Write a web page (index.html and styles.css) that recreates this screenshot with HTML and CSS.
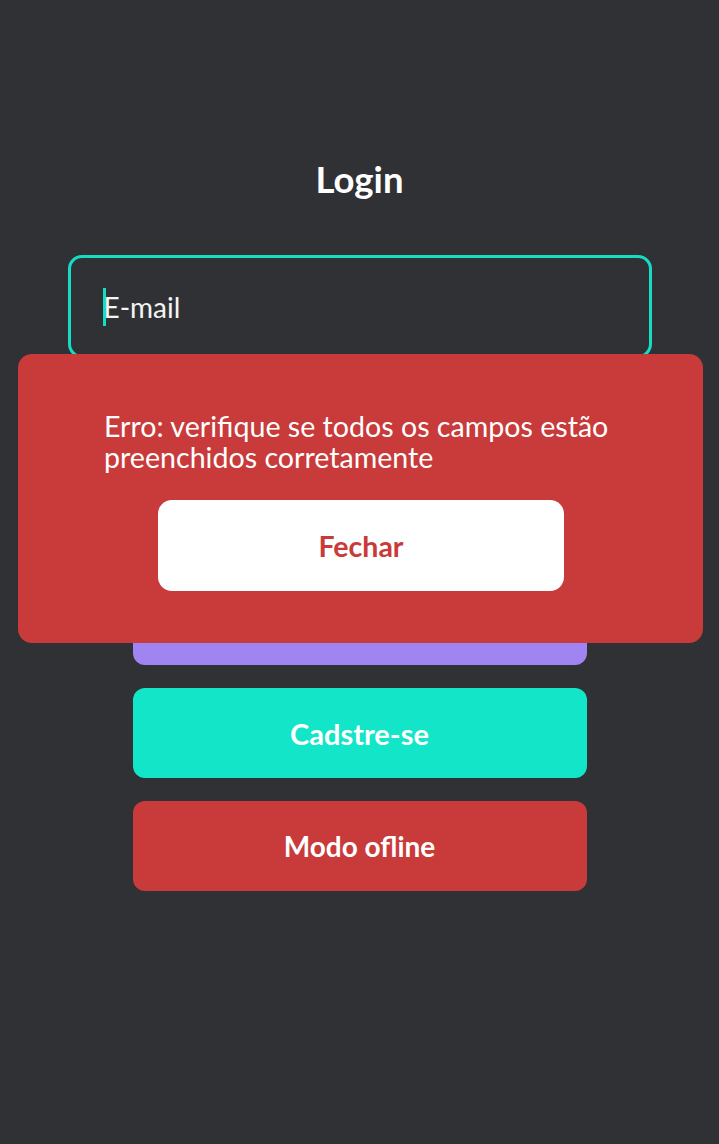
FILE: index.html
```html
<!DOCTYPE html>
<html lang="pt">
<head>
<meta charset="utf-8">
<link rel="stylesheet" href="styles.css">
</head>
<body>
<main class="screen">
  <h1 class="title">Login</h1>
  <div class="field field-focus"><span class="caret"></span><span class="placeholder">E-mail</span></div>
  <div class="field"></div>
  <div class="actions">
    <button class="btn btn-purple">Entrar</button>
    <button class="btn btn-teal">Cadstre-se</button>
    <button class="btn btn-red">Modo ofline</button>
  </div>
</main>
<div class="modal">
  <p class="modal-text">Erro: verifique se todos os campos estão preenchidos corretamente</p>
  <button class="modal-btn">Fechar</button>
</div>
</body>
</html>
```
FILE: styles.css
```css
html, body {
  margin: 0;
  padding: 0;
}
body {
  background: #303135;
  font-family: Lato, "Noto Sans", sans-serif;
  color: #ffffff;
  width: 719px;
  height: 1144px;
  overflow: hidden;
  position: relative;
}
.screen {
  display: flex;
  flex-direction: column;
  align-items: center;
  padding-top: 152px;
}
.title {
  margin: 0;
  font-size: 36.5px;
  font-weight: 700;
  line-height: 54px;
  height: 54px;
}
.field {
  box-sizing: border-box;
  margin-top: 49px;
  width: 584px;
  height: 103px;
  border: 3px solid #3a3b40;
  border-radius: 14px;
  display: flex;
  align-items: center;
  padding-left: 32px;
  font-size: 28px;
}
.field-focus {
  border-color: #17dcc4;
}
.field + .field {
  margin-top: 22px;
}
.caret {
  width: 3px;
  height: 38px;
  background: #17dcc4;
  margin-right: -2px;
}
.placeholder {
  color: #f4f4f4;
}
.actions {
  display: flex;
  flex-direction: column;
  gap: 23px;
  margin-top: 92px;
}
.btn {
  width: 454px;
  height: 90px;
  border: none;
  border-radius: 12px;
  font-family: Lato, "Noto Sans", sans-serif;
  font-weight: 700;
  font-size: 28px;
  color: #ffffff;
}
.btn-teal { font-size: 29px; }
.btn-purple { background: #a085f2; }
.btn-teal { background: #13e5c8; }
.btn-red { background: #c93a3a; }
.modal {
  position: absolute;
  left: 18px;
  top: 354px;
  width: 685px;
  height: 289px;
  box-sizing: border-box;
  background: #c93a3a;
  border-radius: 14px;
  padding: 57px 40px 0 86px;
  display: flex;
  flex-direction: column;
}
.modal-text {
  margin: 0;
  font-size: 28.6px;
  line-height: 31px;
  color: #ffffff;
}
.modal-btn {
  align-self: flex-start;
  margin-left: 54px;
  margin-top: 27px;
  width: 406px;
  height: 91px;
  border: none;
  border-radius: 14px;
  background: #ffffff;
  color: #c93a3a;
  font-family: Lato, "Noto Sans", sans-serif;
  font-weight: 700;
  font-size: 28.5px;
}
```
